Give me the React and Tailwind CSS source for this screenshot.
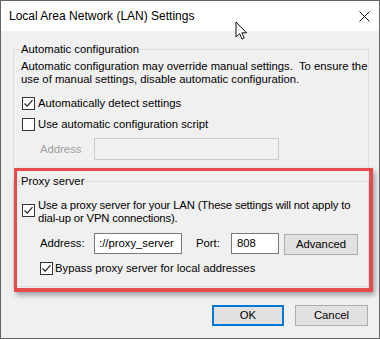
import React from "react";

function CheckBox({ checked }) {
  return (
    <svg width="13" height="13" viewBox="0 0 13 13" className="shrink-0 block">
      <rect x="0.5" y="0.5" width="12" height="12" fill="#ffffff" stroke="#333333" strokeWidth="1" />
      {checked && (
        <path d="M2.5 6.5 L5.2 9.2 L10.5 3.2" fill="none" stroke="#222222" strokeWidth="1.2" />
      )}
    </svg>
  );
}

export default function App() {
  return (
    <div className="relative w-[380px] h-[339px] border border-[#646464] bg-[#f0f0f0] flex flex-col font-['Liberation_Sans',Arial,sans-serif] text-[12px] text-black overflow-hidden whitespace-nowrap">
      {/* Title bar */}
      <div className="h-[30px] bg-white flex items-center justify-between pl-[8px] pr-[9px] shrink-0">
        <span className="leading-[14px]">Local Area Network (LAN) Settings</span>
        <svg width="11" height="11" viewBox="0 0 11 11" className="block">
          <path d="M0.5 0.5 L10.5 10.5 M10.5 0.5 L0.5 10.5" stroke="#111111" strokeWidth="1" />
        </svg>
      </div>

      {/* Body */}
      <div className="flex-1 pl-[12px] text-[11.3px]">
        <div className="w-[356px] flex flex-col">
          {/* Automatic configuration */}
          <fieldset className="mt-[11px] h-[128px] border border-[#dcdcdc]">
            <legend className="ml-[6px] px-[1px] leading-[14px]">Automatic configuration</legend>
            <div className="pl-[7px] flex flex-col">
              <p className="mt-[4px] leading-[13px]">
                Automatic configuration may override manual settings.&nbsp; To ensure the
                <br />
                use of manual settings, disable automatic configuration.
              </p>
              <div className="mt-[11px] h-[13px] flex items-center gap-[3px] pl-[1px]">
                <CheckBox checked />
                <span className="leading-[13px]">Automatically detect settings</span>
              </div>
              <div className="mt-[8px] h-[13px] flex items-center gap-[3px] pl-[1px]">
                <CheckBox />
                <span className="leading-[13px]">Use automatic configuration script</span>
              </div>
              <div className="mt-[7px] flex items-center pl-[19px]">
                <span className="w-[54px] text-[#a0a0a0] leading-[13px]">Address</span>
                <div className="w-[185px] h-[22px] border border-[#cccccc] bg-[#f0f0f0]" />
              </div>
            </div>
          </fieldset>

          {/* Proxy server */}
          <fieldset className="mt-[4px] h-[113px] border border-[#dcdcdc]">
            <legend className="ml-[6px] px-[1px] leading-[14px]">Proxy server</legend>
            <div className="pl-[7px] flex flex-col">
              <div className="mt-[11px] flex items-start gap-[3px] pl-[1px]">
                <div className="mt-[5px]">
                  <CheckBox checked />
                </div>
                <span className="leading-[13px] tracking-[-0.15px]">
                  Use a proxy server for your LAN (These settings will not apply to
                  <br />
                  dial-up or VPN connections).
                </span>
              </div>
              <div className="mt-[8px] flex items-start pl-[19px]">
                <span className="w-[54px] h-[21px] flex items-center">Address:</span>
                <div className="w-[88px] h-[21px] border border-[#7a7a7a] bg-white flex items-center pl-[4px] overflow-hidden">
                  ://proxy_server
                </div>
                <span className="ml-[14px] w-[35px] h-[21px] flex items-center">Port:</span>
                <div className="w-[48px] h-[21px] border border-[#7a7a7a] bg-white flex items-center pl-[5px]">
                  808
                </div>
                <div className="ml-[5px] mt-[1px] w-[74px] h-[21px] border border-[#adadad] bg-[#e1e1e1] flex items-center justify-center">
                  Advanced
                </div>
              </div>
              <div className="mt-[7px] h-[13px] flex items-center gap-[2px] pl-[19px]">
                <CheckBox checked />
                <span className="leading-[13px]">Bypass proxy server for local addresses</span>
              </div>
            </div>
          </fieldset>

          {/* Buttons */}
          <div className="mt-[18px] flex justify-end gap-[11px] pr-[1px]">
            <div className="w-[72px] h-[21px] border-2 border-[#0078d7] bg-[#e1e1e1] flex items-center justify-center">
              OK
            </div>
            <div className="w-[73px] h-[21px] border border-[#adadad] bg-[#e1e1e1] flex items-center justify-center">
              Cancel
            </div>
          </div>
        </div>
      </div>

      {/* Red highlight overlay */}
      <div className="absolute left-[13px] top-[167px] w-[359px] h-[124px] border-[3px] border-r-4 border-b-4 border-[#e84b4b] shadow-[2px_3px_5px_rgba(0,0,0,0.35)] pointer-events-none" />

      {/* Mouse cursor */}
      <svg width="13" height="20" viewBox="0 0 13 20" className="absolute left-[234px] top-[20px]">
        <path
          d="M1 1 L1 16 L4.6 12.6 L7 18 L9.2 17 L6.9 11.8 L11.6 11.8 Z"
          fill="#ffffff"
          stroke="#111111"
          strokeWidth="1"
          strokeLinejoin="round"
        />
      </svg>
    </div>
  );
}
